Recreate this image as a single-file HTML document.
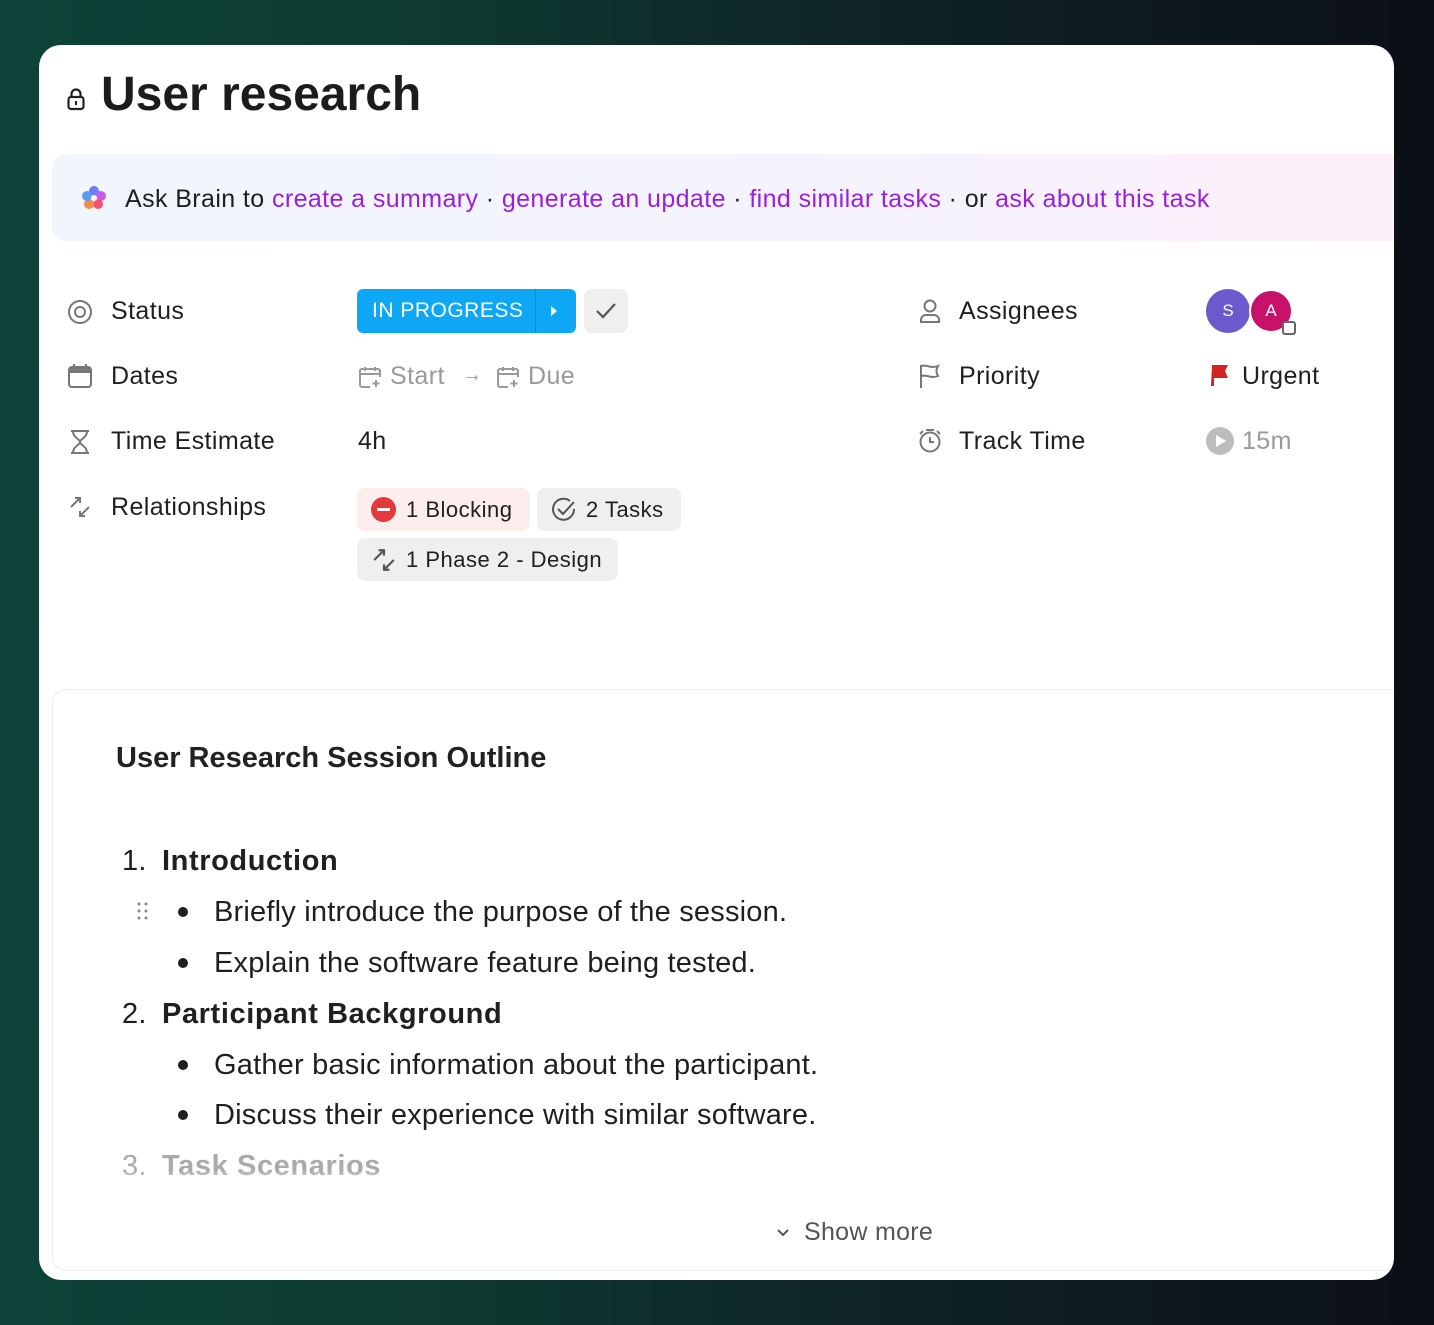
<!DOCTYPE html>
<html><head><meta charset="utf-8"><style>
*{margin:0;padding:0;box-sizing:border-box}
body{width:1434px;height:1325px;overflow:hidden;font-family:"Liberation Sans",sans-serif;background:linear-gradient(90deg,#0d4338 0%,#0e3a31 30%,#0f2426 60%,#0b0f16 100%);position:relative;color:#1f1f1f}
.card{position:absolute;left:39px;top:45px;width:1355px;height:1235px;background:#fff;border-radius:22px;overflow:hidden}
.abs{position:absolute;white-space:nowrap}
.t{font-size:25px;letter-spacing:0.4px}
.banner{position:absolute;left:13px;top:109px;width:1360px;height:87px;border-radius:14px;background:linear-gradient(90deg,#f0f6fc,#f5f3fc 60%,#fdf0fb)}
.p{color:#9b1fd8}
.chip{position:absolute;height:43px;border-radius:8px;background:#efefef;font-size:22px;display:flex;align-items:center;padding-left:14px;letter-spacing:0.5px}
.desc{position:absolute;left:13px;top:644px;width:1400px;height:582px;border:1px solid #ececec;border-radius:14px}
.li{font-size:29px;position:absolute;white-space:nowrap;letter-spacing:0.2px}
.dot{position:absolute;width:10px;height:10px;border-radius:50%;background:#1f1f1f}
</style></head><body>
<div class="card">
 <svg class="abs" style="left:27px;top:42px" width="20" height="24" viewBox="0 0 20 24"><rect x="2.5" y="10" width="15" height="12" rx="2.5" fill="none" stroke="#222" stroke-width="2.2"/><path d="M5.5 10V7a4.5 4.5 0 0 1 9 0v3" fill="none" stroke="#222" stroke-width="2.2"/><rect x="9" y="14" width="2" height="4" fill="#222"/></svg>
 <div class="abs" style="left:62px;top:22px;font-size:48px;font-weight:bold;color:#1c1c1c">User research</div>
 <div class="banner">
  <svg class="abs" style="left:27px;top:29px" width="30" height="30" viewBox="0 0 30 30"><circle cx="15" cy="8" r="5" fill="#6d7df5"/><circle cx="22" cy="13" r="5" fill="#c65be6"/><circle cx="19" cy="21" r="5" fill="#f0546e"/><circle cx="10" cy="21" r="5" fill="#f58a4a"/><circle cx="8" cy="13" r="5" fill="#5a9cf5"/><circle cx="15" cy="15" r="3" fill="#fff"/></svg>
  <div class="abs t" style="left:73px;top:31px">Ask Brain to <span class="p">create a summary</span> · <span class="p">generate an update</span> · <span class="p">find similar tasks</span> · or <span class="p">ask about this task</span></div>
 </div>
 <svg class="abs" style="left:28px;top:254px" width="26" height="26" viewBox="0 0 26 26"><circle cx="13" cy="13" r="11" fill="none" stroke="#777" stroke-width="2"/><circle cx="13" cy="13" r="5" fill="none" stroke="#777" stroke-width="2"/></svg>
 <div class="abs t" style="left:72px;top:252px">Status</div>
 <svg class="abs" style="left:28px;top:318px" width="26" height="26" viewBox="0 0 26 26"><rect x="2" y="4" width="22" height="20" rx="3" fill="none" stroke="#777" stroke-width="2"/><rect x="2" y="4" width="22" height="6" fill="#777"/><rect x="6" y="1" width="2" height="5" fill="#777"/><rect x="18" y="1" width="2" height="5" fill="#777"/></svg>
 <div class="abs t" style="left:72px;top:317px">Dates</div>
 <svg class="abs" style="left:29px;top:384px" width="24" height="26" viewBox="0 0 24 26"><path d="M3 2h18M3 24h18M5 2c0 7 7 8 7 11s-7 4-7 11M19 2c0 7-7 8-7 11s7 4 7 11" fill="none" stroke="#777" stroke-width="2"/></svg>
 <div class="abs t" style="left:72px;top:382px">Time Estimate</div>
 <svg class="abs" style="left:29px;top:450px" width="24" height="24" viewBox="0 0 24 24"><path d="M3 12L12 3M7 3h5v5M21 12l-9 9M17 21h-5v-5" fill="none" stroke="#777" stroke-width="2"/></svg>
 <div class="abs t" style="left:72px;top:448px">Relationships</div>
 <div class="abs" style="left:318px;top:244px;width:219px;height:44px;background:#0ea7f5;border-radius:6px;color:#fff;font-size:21px;letter-spacing:0.5px;line-height:44px;padding-left:15px">IN PROGRESS<div style="position:absolute;left:178px;top:0;width:1px;height:44px;background:#0a86c6"></div><svg style="position:absolute;left:192px;top:16px" width="10" height="12" viewBox="0 0 10 12"><path d="M2 1l6 5-6 5z" fill="#fff"/></svg></div>
 <div class="abs" style="left:545px;top:244px;width:44px;height:44px;background:#efefef;border-radius:8px"><svg style="position:absolute;left:11px;top:12px" width="22" height="20" viewBox="0 0 22 20"><path d="M2 10l6 6L20 3" fill="none" stroke="#555" stroke-width="2.2"/></svg></div>
 <svg class="abs" style="left:319px;top:320px" width="24" height="24" viewBox="0 0 24 24"><path d="M12 22H4a2 2 0 0 1-2-2V6a2 2 0 0 1 2-2h16a2 2 0 0 1 2 2v6M2 9h20M7 2v4M17 2v4M18 15v7M14.5 18.5h7" fill="none" stroke="#999" stroke-width="2"/></svg>
 <div class="abs t" style="left:351px;top:317px;color:#999">Start</div>
 <div class="abs" style="left:423px;top:319px;color:#999;font-size:20px">→</div>
 <svg class="abs" style="left:457px;top:320px" width="24" height="24" viewBox="0 0 24 24"><path d="M12 22H4a2 2 0 0 1-2-2V6a2 2 0 0 1 2-2h16a2 2 0 0 1 2 2v6M2 9h20M7 2v4M17 2v4M18 15v7M14.5 18.5h7" fill="none" stroke="#999" stroke-width="2"/></svg>
 <div class="abs t" style="left:489px;top:317px;color:#999">Due</div>
 <div class="abs t" style="left:319px;top:382px">4h</div>
 <div class="chip" style="left:318px;top:443px;width:173px;background:#fdeded"><span style="width:25px;height:25px;border-radius:50%;background:#e5383b;display:inline-block;position:relative;margin-right:10px"><span style="position:absolute;left:6px;top:11px;width:13px;height:3px;background:#fff"></span></span>1 Blocking</div>
 <div class="chip" style="left:498px;top:443px;width:144px"><svg width="26" height="26" viewBox="0 0 26 26" style="margin-right:9px"><path d="M23 12a10.5 10.5 0 1 1-4-8" fill="none" stroke="#555" stroke-width="2"/><path d="M7 12l5 5 11-12" fill="none" stroke="#555" stroke-width="2"/></svg>2 Tasks</div>
 <div class="chip" style="left:318px;top:493px;width:261px"><svg width="26" height="26" viewBox="0 0 24 24" style="margin-right:9px"><path d="M3 12L12 3M7 3h5v5M21 12l-9 9M17 21h-5v-5" fill="none" stroke="#555" stroke-width="2"/></svg>1 Phase 2 - Design</div>
 <svg class="abs" style="left:879px;top:253px" width="24" height="26" viewBox="0 0 24 26"><circle cx="12" cy="8" r="5.5" fill="none" stroke="#777" stroke-width="2"/><path d="M3 24v-2a5 5 0 0 1 5-5h8a5 5 0 0 1 5 5v2z" fill="none" stroke="#777" stroke-width="2"/></svg>
 <div class="abs t" style="left:920px;top:252px">Assignees</div>
 <svg class="abs" style="left:879px;top:318px" width="24" height="26" viewBox="0 0 24 26"><path d="M3 25V3c6-2 9 3 17 0-2 4-2 6 0 10-8 3-11-2-17 0" fill="none" stroke="#777" stroke-width="2"/></svg>
 <div class="abs t" style="left:920px;top:317px">Priority</div>
 <svg class="abs" style="left:879px;top:383px" width="24" height="26" viewBox="0 0 24 26"><circle cx="12" cy="14" r="9.5" fill="none" stroke="#777" stroke-width="2"/><path d="M12 9v5h4M8 2h8M2 6l3-3M22 6l-3-3" fill="none" stroke="#777" stroke-width="2"/></svg>
 <div class="abs t" style="left:920px;top:382px">Track Time</div>
 <div class="abs" style="left:1167px;top:244px;width:44px;height:44px;border-radius:50%;background:#6a5acd;color:#fff;font-size:17px;text-align:center;line-height:44px">S</div>
 <div class="abs" style="left:1210px;top:244px;width:44px;height:44px;border-radius:50%;background:#c8126a;color:#fff;font-size:17px;text-align:center;line-height:40px;border:2px solid #fff">A</div>
 <div class="abs" style="left:1243px;top:276px;width:14px;height:14px;border-radius:3px;border:2.5px solid #666;background:#fff"></div>
 <svg class="abs" style="left:1169px;top:318px" width="24" height="24" viewBox="0 0 24 24"><path d="M4 2h16l-3 6 3 7H6v8H3z" fill="#d32424"/></svg>
 <div class="abs t" style="left:1203px;top:317px">Urgent</div>
 <svg class="abs" style="left:1166px;top:381px" width="30" height="30" viewBox="0 0 30 30"><circle cx="15" cy="15" r="14" fill="#bdbdbd"/><path d="M11 9l10 6-10 6z" fill="#fff"/></svg>
 <div class="abs t" style="left:1203px;top:382px;color:#999">15m</div>
 <div class="desc"></div>
 <div class="abs" style="left:77px;top:697px;font-size:29px;font-weight:bold;color:#222">User Research Session Outline</div>
 <div class="li" style="left:83px;top:800px">1.</div>
 <div class="li" style="left:123px;top:800px;font-weight:bold;letter-spacing:0.6px">Introduction</div>
 <svg class="abs" style="left:97px;top:856px" width="14" height="20" viewBox="0 0 14 20"><g fill="#888"><circle cx="3" cy="3" r="1.5"/><circle cx="10" cy="3" r="1.5"/><circle cx="3" cy="10" r="1.5"/><circle cx="10" cy="10" r="1.5"/><circle cx="3" cy="17" r="1.5"/><circle cx="10" cy="17" r="1.5"/></g></svg>
 <div class="dot" style="left:139px;top:862px"></div>
 <div class="li" style="left:175px;top:851px">Briefly introduce the purpose of the session.</div>
 <div class="dot" style="left:139px;top:913px"></div>
 <div class="li" style="left:175px;top:902px">Explain the software feature being tested.</div>
 <div class="li" style="left:83px;top:953px">2.</div>
 <div class="li" style="left:123px;top:953px;font-weight:bold;letter-spacing:0.6px">Participant Background</div>
 <div class="dot" style="left:139px;top:1015px"></div>
 <div class="li" style="left:175px;top:1004px">Gather basic information about the participant.</div>
 <div class="dot" style="left:139px;top:1065px"></div>
 <div class="li" style="left:175px;top:1054px">Discuss their experience with similar software.</div>
 <div class="li" style="left:83px;top:1105px;color:#aaa">3.</div>
 <div class="li" style="left:123px;top:1105px;font-weight:bold;color:#aaa;letter-spacing:0.6px">Task Scenarios</div>
 <div class="abs" style="left:14px;top:1125px;width:1340px;height:20px;background:linear-gradient(rgba(255,255,255,0),#fff)"></div>
 <svg class="abs" style="left:736px;top:1182px" width="16" height="12" viewBox="0 0 16 12"><path d="M3 3l5 5 5-5" fill="none" stroke="#555" stroke-width="2"/></svg>
 <div class="abs" style="left:765px;top:1173px;font-size:25px;color:#555;letter-spacing:0.3px">Show more</div>
</div>
</body></html>
